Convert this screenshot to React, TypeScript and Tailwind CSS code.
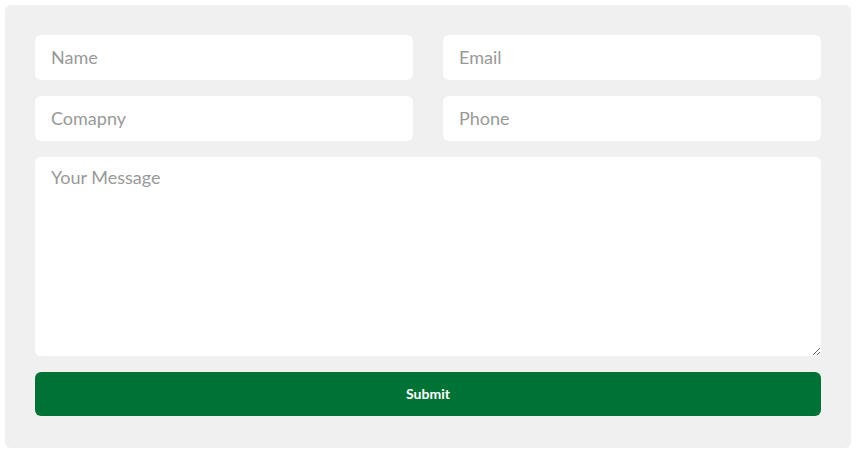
import React from "react";

export default function App() {
  const field =
    "h-[45px] w-full rounded-[6px] border-0 bg-white px-4 pb-[2px] text-[18px] text-[#555] outline-none placeholder:text-[#999]";
  return (
    <div className="min-h-[453px] bg-white p-[5px]" style={{ fontFamily: "Lato, 'Noto Sans', sans-serif" }}>
      <form className="flex w-[846px] flex-col gap-4 rounded-[6px] bg-[#f0f0f0] px-[30px] pt-[30px] pb-[32px]">
        <div className="grid grid-cols-2 gap-x-[30px] gap-y-4">
          <input className={field} placeholder="Name" />
          <input className={field} placeholder="Email" />
          <input className={field} placeholder="Comapny" />
          <input className={field} placeholder="Phone" />
        </div>
        <textarea
          className="block h-[199px] w-full rounded-[6px] border-0 bg-white px-4 py-[8px] text-[18px] leading-[24px] text-[#555] outline-none placeholder:text-[#999]"
          placeholder="Your Message"
        />
        <button
          type="button"
          className="h-[44px] w-full rounded-[6px] bg-[#007236] pb-[1px] text-[14px] font-bold text-white"
        >
          Submit
        </button>
      </form>
    </div>
  );
}
